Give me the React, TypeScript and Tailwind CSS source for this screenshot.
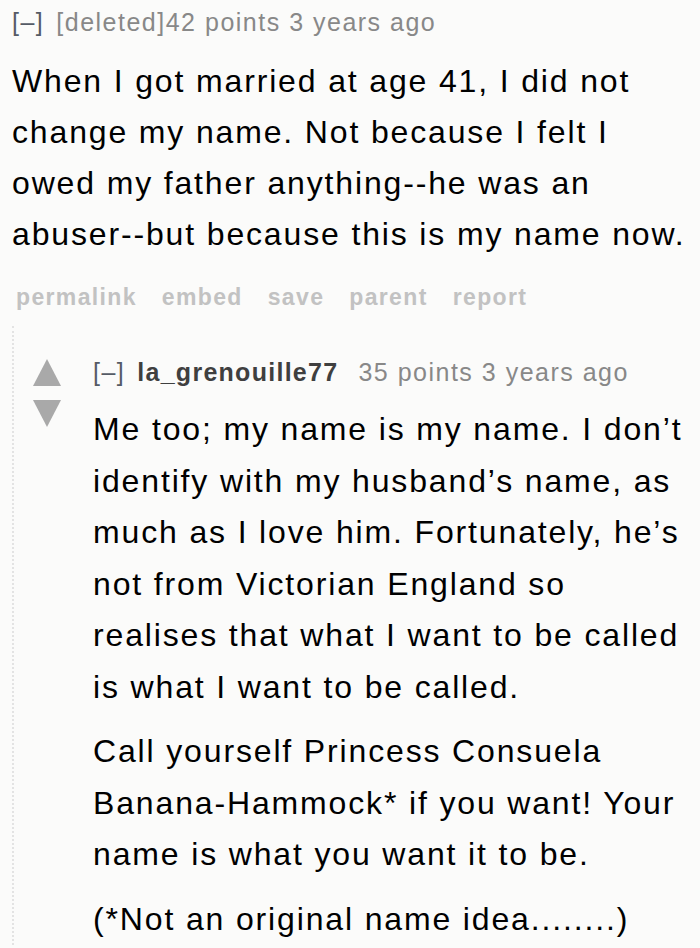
import React from "react";

const font = { fontFamily: '"Liberation Sans", Arial, sans-serif' };

function Arrow({ down }: { down?: boolean }) {
  return (
    <svg width="28" height="27" viewBox="0 0 28 27" className="block">
      <polygon
        points={down ? "0,0 28,0 14,27" : "14,0 28,27 0,27"}
        fill="#a9a9a9"
      />
    </svg>
  );
}

export default function App() {
  const buttons = ["permalink", "embed", "save", "parent", "report"];
  return (
    <div
      className="w-[700px] h-[948px] overflow-hidden bg-[#fbfbfa] text-black"
      style={font}
    >
      <div className="pl-[12px] pr-2 pt-[6px]">
        <div className="text-[25px] leading-[32px] tracking-[1.5px] text-[#888]">
          <span className="text-[#555b66]">[–]</span>
          <span className="ml-[12px]">[deleted]</span>
          <span>42 points 3 years ago</span>
        </div>
        <div className="mt-[18px] text-[32px] leading-[51px] tracking-[1.85px]">
          When I got married at age 41, I did not change my name. Not because I
          felt I owed my father anything--he was an abuser--but because this is
          my name now.
        </div>
        <div className="mt-[22px] flex gap-[25px] pl-[4px] text-[23px] leading-[30px] tracking-[1.35px] font-bold text-[#c2c2c2]">
          {buttons.map((b) => (
            <span key={b}>{b}</span>
          ))}
        </div>
      </div>

      <div className="ml-[12px] mt-[14px] border-l-2 border-dotted border-[#e3e3e3] flex pt-[30px]">
        <div className="w-[79px] flex flex-col pl-[19px] pt-[3px] gap-[14px]">
          <Arrow />
          <Arrow down />
        </div>
        <div className="flex-1 pr-2">
          <div className="text-[25px] leading-[32px] tracking-[1.5px] text-[#888]">
            <span className="text-[#555b66]">[–]</span>
            <span className="ml-[12px] font-bold tracking-[1.27px] text-[#3f3f3f]">
              la_grenouille77
            </span>
            <span className="ml-[20px]">35 points 3 years ago</span>
          </div>
          <div className="mt-[16px] text-[32px] leading-[51.5px] tracking-[1.85px]">
            <p>
              Me too; my name is my name. I don’t identify with my husband’s
              name, as much as I love him. Fortunately, he’s not from Victorian
              England so realises that what I want to be called is what I want
              to be called.
            </p>
            <p className="mt-[13px]">
              Call yourself Princess Consuela Banana-Hammock* if you want! Your
              name is what you want it to be.
            </p>
            <p className="mt-[13px]">(*Not an original name idea........)</p>
          </div>
        </div>
      </div>
    </div>
  );
}
